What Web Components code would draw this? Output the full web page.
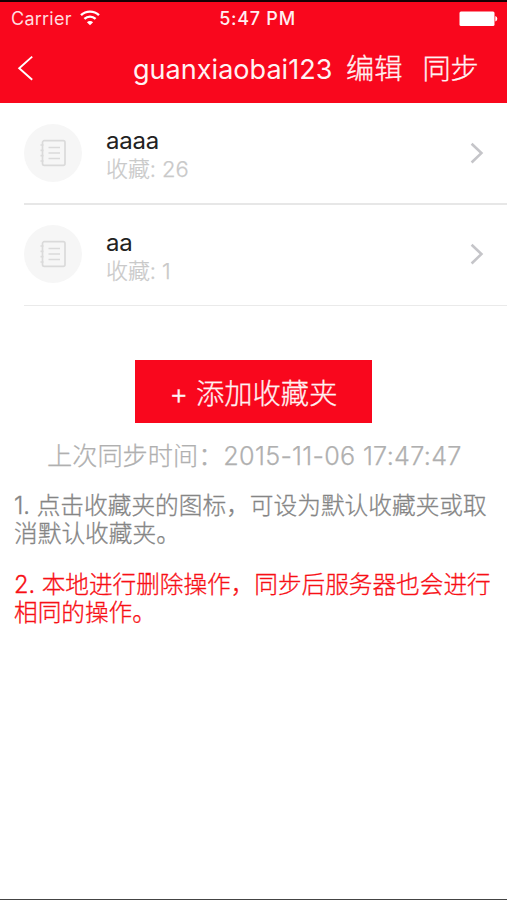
<!DOCTYPE html>
<html lang="zh-CN">
<head>
<meta charset="utf-8">
<title>收藏夹</title>
<style>
html,body{margin:0;height:100%;background:#fff}
body{font-family:Inter,"Noto Sans CJK SC",sans-serif}
</style>
</head>
<body>
<favorites-page></favorites-page>
<script>
const define = (name, html) => customElements.define(name, class extends HTMLElement {
  constructor() {
    super();
    this.attachShadow({mode: 'open'}).innerHTML = html;
  }
});

define('status-bar', `
<style>
:host{display:grid;grid-template-columns:1fr auto 1fr;align-items:center;height:34px;padding:0 9px 0 11px;box-sizing:border-box;color:#fff;font-size:18px;line-height:34px}
.left{display:flex;align-items:center;gap:8px;color:#ffdcdf}
.carrier{letter-spacing:.25px}
.time{font-weight:500;font-size:18px;letter-spacing:.75px;color:#ffeef0;padding-left:6px}
.battery{justify-self:end}
svg{display:block}
.wifi{margin-top:-3px}
</style>
<div class="left"><span class="carrier">Carrier</span>
<svg class="wifi" width="20" height="16" viewBox="0 0 20 16" fill="none" stroke="#fff" stroke-width="2.4"><path d="M1 5.2C6 .4 14 .4 19 5.2M4.4 8.9c3.2-3 8-3 11.2 0"/><path d="M6.9 12.2c1.8-1.6 4.4-1.6 6.2 0L10 15.2z" fill="#fff" stroke="none"/></svg></div>
<span class="time">5:47 PM</span>
<svg class="battery" width="39" height="16" viewBox="0 0 39 16" fill="#fff"><rect x=".5" y=".5" width="35" height="14.5" rx="1.5"/><path d="M36.3 5q2 .5 2 2.8t-2 2.8z"/></svg>`);

define('nav-bar', `
<style>
:host{display:flex;align-items:center;height:67px;padding-left:17px;box-sizing:border-box;color:#fff2f3;font-size:28.2px;line-height:67px;font-weight:300;-webkit-text-stroke:.3px;white-space:nowrap}
svg{display:block;margin:-3px 99px 0 0}
.title{font-size:27px;width:199px;margin:-1px 14px 0 0;font-weight:400;-webkit-text-stroke:0;letter-spacing:.04px}
.edit{margin-right:20px}
</style>
<svg width="17" height="26" viewBox="0 0 17 26" fill="none" stroke="#fff" stroke-width="1.9"><path d="M15.2 1.6 2.2 13.2l13 11.6"/></svg>
<span class="title"><slot></slot></span><span class="edit">编辑</span><span>同步</span>`);

define('folder-row', `
<style>
:host{display:flex;align-items:center;height:102px;margin-left:24px;padding:0 22px 1px 0;box-sizing:border-box;border-bottom:2px solid #e7e7e7}
.badge{display:grid;place-items:center;width:58px;height:58px;border-radius:50%;background:#f6f6f6;margin-right:24px}
.text{flex:1;padding-top:5px}
.name{font-size:24px;line-height:28px;color:#222;letter-spacing:-.2px}
.count{font-size:22px;line-height:28px;color:#c9c9c9;font-weight:300;-webkit-text-stroke:.25px;letter-spacing:-.1px}
svg{display:block}
</style>
<div class="badge"><svg width="28" height="28" viewBox="0 0 28 28" fill="none" stroke="#dadada" stroke-width="1.7"><rect x="3.5" y="1.7" width="22.5" height="24.6" rx="1.8"/><path d="M9.5 8.5H21M9.5 14H21M9.5 19.5H21"/><path d="M1.5 6h3M1.5 11.3h3M1.5 16.6h3M1.5 22h3"/></svg></div>
<div class="text"><div class="name"><slot name="name"></slot></div><div class="count">收藏: <slot name="count"></slot></div></div>
<svg width="15" height="22" viewBox="0 0 15 22" fill="none" stroke="#c5c5c9" stroke-width="2.6"><path d="m1.6 1.7 9.8 9.4-9.8 9.4"/></svg>`);

define('add-button', `
<style>
:host{display:flex;justify-content:center;box-sizing:border-box;width:237px;height:63px;padding-top:3px;margin:54px 0 0 135px;background:#f9071d;color:#fff2f3;font-size:28.3px;line-height:63px;font-weight:300;-webkit-text-stroke:.3px}
</style><span><slot></slot></span>`);

define('sync-time', `
<style>
:host{display:block;margin:17px 0 0 47px;font-size:25.2px;line-height:32px;color:#b0b0b0;font-weight:300;-webkit-text-stroke:.25px;white-space:nowrap}
.date{letter-spacing:.3px}
</style><slot></slot><span class="date"><slot name="date"></slot></span>`);

define('note-text', `
<style>
:host{display:block;margin:20px 0 0 14px;font-size:23.7px;line-height:28px;color:var(--note,#858585);font-weight:300;-webkit-text-stroke:.3px;white-space:nowrap}
</style><slot></slot>`);

define('favorites-page', `
<style>
:host{display:flex;flex-direction:column;height:900px;box-sizing:border-box;border-top:2px solid #160003;border-bottom:1px solid #444;background:#fff;overflow:hidden}
header{background:#f9071d;flex:none}
.last{border-bottom:1px solid #eaeaea;height:101px;padding-bottom:2px}
.red{--note:#f80f16;margin-top:23px;letter-spacing:-.06px}
</style>
<header><status-bar></status-bar><nav-bar>guanxiaobai123</nav-bar></header>
<folder-row><span slot="name">aaaa</span><span slot="count">26</span></folder-row>
<folder-row class="last"><span slot="name">aa</span><span slot="count">1</span></folder-row>
<add-button>+ 添加收藏夹</add-button>
<sync-time>上次同步时间：<span slot="date">2015-11-06 17:47:47</span></sync-time>
<note-text>1. 点击收藏夹的图标，可设为默认收藏夹或取<br>消默认收藏夹。</note-text>
<note-text class="red">2. 本地进行删除操作，同步后服务器也会进行<br>相同的操作。</note-text>`);
</script>
</body>
</html>
